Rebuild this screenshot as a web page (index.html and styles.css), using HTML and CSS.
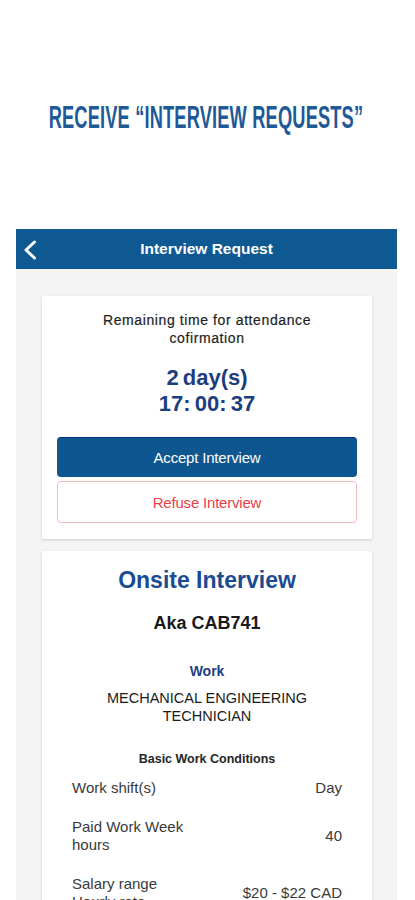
FILE: index.html
```html
<!DOCTYPE html>
<html lang="en">
<head>
<meta charset="utf-8">
<title>Interview Request</title>
<link rel="stylesheet" href="styles.css">
</head>
<body>
<div class="hero">
  <h1 class="hero-title">RECEIVE “INTERVIEW REQUESTS”</h1>
</div>
<div class="phone">
  <header class="appbar">
    <span class="back">
      <svg width="14" height="20" viewBox="0 0 14 20"><polyline points="11.5,2 3,10 11.5,18" fill="none" stroke="#fff" stroke-width="3" stroke-linecap="round" stroke-linejoin="round"/></svg>
    </span>
    <span class="appbar-title">Interview Request</span>
    <span></span>
  </header>

  <section class="card card-timer">
    <p class="remain">Remaining time for attendance cofirmation</p>
    <p class="countdown">2 day(s)<br>17: 00: 37</p>
    <button class="btn btn-accept">Accept Interview</button>
    <button class="btn btn-refuse">Refuse Interview</button>
  </section>

  <section class="card card-detail">
    <h2 class="kind">Onsite Interview</h2>
    <p class="company">Aka CAB741</p>
    <p class="section-label">Work</p>
    <p class="job">MECHANICAL ENGINEERING TECHNICIAN</p>
    <p class="conditions">Basic Work Conditions</p>
    <div class="row"><span class="label">Work shift(s)</span><span class="value">Day</span></div>
    <div class="row"><span class="label">Paid Work Week hours</span><span class="value">40</span></div>
    <div class="row"><span class="label">Salary range Hourly rate</span><span class="value">$20 - $22 CAD</span></div>
    <div class="row"><span class="label">Start date</span><span class="value">ASAP</span></div>
  </section>
</div>
</body>
</html>
```
FILE: styles.css
```css
* { box-sizing: border-box; }
html, body { margin: 0; padding: 0; background: #fff; }
body { font-family: "Liberation Sans", Arial, sans-serif; color: #222; overflow-x: hidden; }
p, h1, h2 { margin: 0; }

.hero {
  height: 229px;
  padding-top: 101px;
  display: flex;
  justify-content: center;
}
.hero-title {
  flex: none;
  font-size: 32px;
  line-height: 32px;
  font-weight: 700;
  color: #1e5a97;
  white-space: nowrap;
  transform: scaleX(0.57);
  transform-origin: 50% 50%;
  letter-spacing: 0.3px;
  margin-left: -4px;
}

.phone {
  margin: 0 18px 0 16px;
  background: #f4f4f4;
  padding-bottom: 40px;
}

.appbar {
  height: 40px;
  background: #0f5992;
  display: grid;
  grid-template-columns: 40px 1fr 40px;
  align-items: center;
  color: #fff;
}
.back { display: flex; padding-left: 7px; padding-top: 2px; }
.appbar-title {
  text-align: center;
  font-size: 15.5px;
  font-weight: 700;
}

.card {
  background: #fff;
  margin: 0 25px 0 26px;
  box-shadow: 0 1px 3px rgba(0,0,0,0.16);
  border-radius: 2px;
  text-align: center;
}
.card-timer { margin-top: 27px; padding: 15px 15px 16px; }
.remain {
  font-size: 14px;
  line-height: 18px;
  letter-spacing: 0.6px;
  color: #1e1e1e;
  padding: 0 40px;
  -webkit-text-stroke: 0.2px #1e1e1e;
}
.countdown {
  margin-top: 18px;
  font-size: 22px;
  line-height: 26px;
  font-weight: 700;
  color: #1c3d7e;
  word-spacing: -2px;
}
.btn {
  display: block;
  width: 100%;
  font-family: "Liberation Sans", Arial, sans-serif;
  font-size: 15px;
  border-radius: 4px;
  cursor: pointer;
}
.btn-accept {
  margin-top: 20px;
  height: 40px;
  background: #0e5690;
  color: #fff;
  border: none;
  border-top: 1px solid #0a2d7a;
  letter-spacing: -0.2px;
}
.btn-refuse {
  margin-top: 4px;
  height: 42px;
  background: #fff;
  color: #e8404a;
  border: 1px solid #f6b9bd;
  letter-spacing: -0.2px;
}

.card-detail { margin-top: 12px; padding: 15px 30px 20px; }
.kind {
  font-size: 23px;
  line-height: 28px;
  font-weight: 700;
  color: #1b4b92;
}
.company {
  margin-top: 18px;
  font-size: 18px;
  line-height: 22px;
  font-weight: 700;
  color: #1a1a1a;
}
.section-label {
  margin-top: 28px;
  font-size: 14px;
  line-height: 18px;
  font-weight: 700;
  color: #1c3f86;
}
.job {
  margin-top: 9px;
  font-size: 14.5px;
  line-height: 18px;
  color: #1a1a1a;
  padding: 0 20px;
}
.conditions {
  margin-top: 26px;
  font-size: 12.5px;
  line-height: 16px;
  font-weight: 700;
  color: #262626;
}
.row {
  display: flex;
  justify-content: space-between;
  align-items: center;
  padding: 10.5px 0;
  font-size: 15px;
  line-height: 18px;
  color: #3a3a3a;
  text-align: left;
}
.row:first-of-type { margin-top: 1.5px; }
.label { width: 125px; flex: none; }
.value { text-align: right; }
```
